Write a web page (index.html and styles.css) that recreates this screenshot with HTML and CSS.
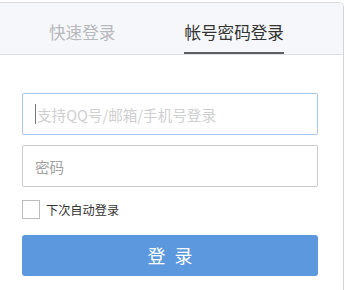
FILE: index.html
```html
<!DOCTYPE html>
<html lang="zh-CN">

<head>
    <meta charset="UTF-8">
    <title>登录</title>
    <link rel="stylesheet" href="styles.css">
</head>

<body>
    <div class="login-box">
        <div class="tabs">
            <div class="tab">快速登录</div>
            <div class="tab active">帐号密码登录</div>
        </div>
        <div class="form">
            <div class="input focus"><span class="caret"></span><span class="ph light">支持QQ号/邮箱/手机号登录</span></div>
            <div class="input"><span class="ph">密码</span></div>
            <label class="remember"><span class="check"></span>下次自动登录</label>
            <div class="btn">登录</div>
        </div>
    </div>
</body>

</html>
```

FILE: styles.css
```css
body {
    margin: 0;
    background: #fff;
    font-family: "Noto Sans CJK SC", "Noto Sans", sans-serif;
}

.login-box {
    width: 343px;
    height: 300px;
    margin-top: 2px;
    border-top: 1px solid #dcdcdc;
    border-right: 1px solid #d4d4d4;
    border-top-right-radius: 5px;
    overflow: hidden;
}

.tabs {
    display: flex;
    height: 51px;
    padding-left: 49px;
    gap: 69px;
    background: #f6f7fa;
    border-bottom: 1px solid #dedfe2;
}

.tab {
    font-size: 16.6px;
    line-height: 20px;
    padding-top: 19px;
    color: #b6b8bc;
    box-sizing: border-box;
    height: 51px;
}

.tab.active {
    color: #333;
    border-bottom: 2px solid #5d5f63;
}

.form {
    padding: 38px 25px 0 22px;
}

.input {
    height: 40px;
    border: 1px solid #cccccc;
    border-radius: 2px;
    display: flex;
    align-items: center;
    padding-left: 12px;
    margin-bottom: 10px;
}

.input.focus {
    border-color: #a8c6ea;
}

.caret {
    width: 1px;
    height: 20px;
    background: #777;
    margin-right: 1px;
}

.ph {
    font-size: 14.6px;
    color: #a2a2a2;
}

.ph.light {
    color: #cfcfcf;
}

.remember {
    display: flex;
    align-items: center;
    font-size: 12.2px;
    color: #333;
    margin-top: 13px;
}

.check {
    width: 16px;
    height: 17px;
    border: 1px solid #bdbdbd;
    margin-right: 6px;
}

.btn {
    margin-top: 16px;
    height: 41px;
    border-radius: 3px;
    background: #5b98dd;
    color: #fff;
    text-align: center;
    font-size: 18px;
    line-height: 41px;
    letter-spacing: 9px;
    text-indent: 9px;
}
```
